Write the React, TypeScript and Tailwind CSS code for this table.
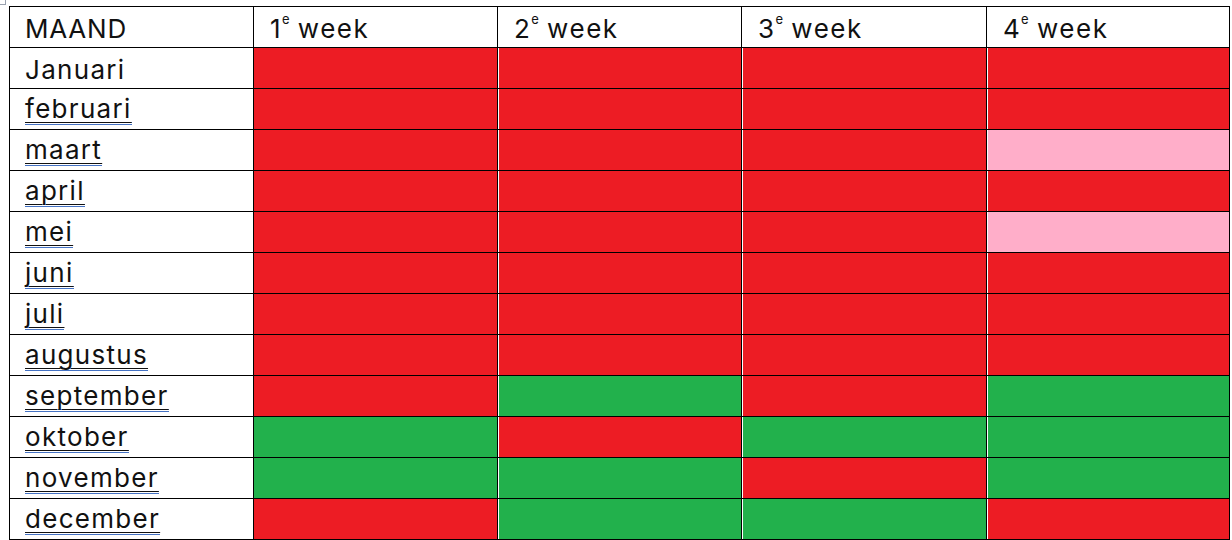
import React from "react";

type Cell = "r" | "g" | "p";

const rows: { month: string; spell: boolean; weeks: Cell[] }[] = [
  { month: "Januari", spell: false, weeks: ["r", "r", "r", "r"] },
  { month: "februari", spell: true, weeks: ["r", "r", "r", "r"] },
  { month: "maart", spell: true, weeks: ["r", "r", "r", "p"] },
  { month: "april", spell: true, weeks: ["r", "r", "r", "r"] },
  { month: "mei", spell: true, weeks: ["r", "r", "r", "p"] },
  { month: "juni", spell: true, weeks: ["r", "r", "r", "r"] },
  { month: "juli", spell: true, weeks: ["r", "r", "r", "r"] },
  { month: "augustus", spell: true, weeks: ["r", "r", "r", "r"] },
  { month: "september", spell: true, weeks: ["r", "g", "r", "g"] },
  { month: "oktober", spell: true, weeks: ["g", "r", "g", "g"] },
  { month: "november", spell: true, weeks: ["g", "g", "r", "g"] },
  { month: "december", spell: true, weeks: ["r", "g", "g", "r"] },
];

const fill: Record<Cell, string> = {
  r: "bg-[#ed1c24]",
  g: "bg-[#22b14c]",
  p: "bg-[#ffaec9]",
};

const App = () => {
  return (
    <div className="relative h-[540px] w-[1232px] bg-white font-['Inter',sans-serif] text-[26px] tracking-[0.05em] text-[#111]">
      {/* table handle */}
      <span className="absolute left-0 top-0 h-[5px] w-[6px] border-b border-r border-gray-400" />

      <div className="pl-[9px] pt-[6px]">
        <div className="grid w-[1221px] grid-cols-[244px_244px_244px_245px_243px] border-l border-t border-black">
          {/* Heading */}
          <div className="flex h-[41px] items-center border-b border-r border-black pl-[15px] pt-[2px] tracking-[0.03em]">
            MAAND
          </div>
          {["1", "2", "3", "4"].map((n) => (
            <div
              key={n}
              className="flex h-[41px] items-center border-b border-r border-black pl-[16px] pt-[2px]"
            >
              {n}
              <span className="relative -top-[8px] text-[13px]">e</span>
              <span className="ml-[7px] tracking-[0.06em]">week</span>
            </div>
          ))}

          {/* Months */}
          {rows.map((row) => (
            <React.Fragment key={row.month}>
              <div className="flex h-[41px] items-center border-b border-r border-black pl-[15px] pt-[2px]">
                {row.spell ? (
                  <span className="border-b-[3px] border-double border-[#4472c4] leading-[27px] underline decoration-[#111] decoration-1 underline-offset-[4px]">
                    {row.month}
                  </span>
                ) : (
                  <span className="leading-[27px]">{row.month}</span>
                )}
              </div>
              {row.weeks.map((w, i) => (
                <div
                  key={i}
                  className={`h-[41px] border-b border-r border-black ${fill[w]} ${
                    i > 0 ? "shadow-[inset_1px_0_0_#ffffff]" : ""
                  }`}
                />
              ))}
            </React.Fragment>
          ))}
        </div>
      </div>
    </div>
  );
};

export default App;
